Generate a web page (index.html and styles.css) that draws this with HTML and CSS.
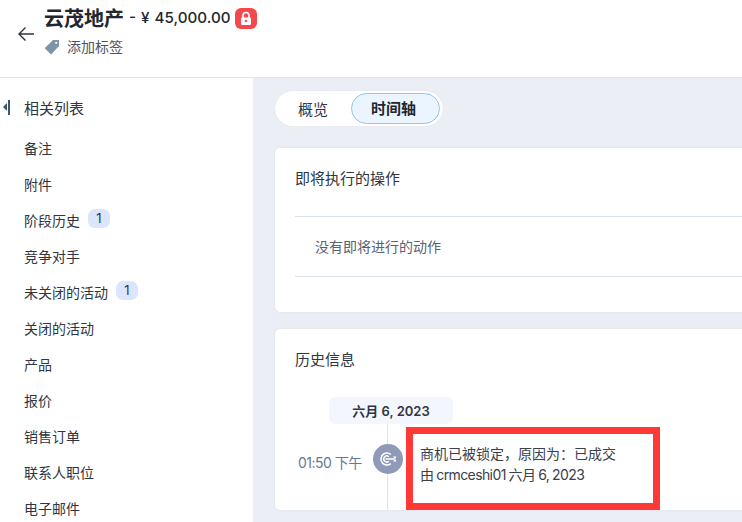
FILE: index.html
```html
<!DOCTYPE html>
<html>
  <head>
    <meta charset="UTF-8">
    <title>云茂地产</title>
    <link rel="stylesheet" href="styles.css">
  </head>
  <body>
    <div class="page">
      <header class="top">
        <svg class="back" width="18" height="16" viewBox="0 0 18 16"><path d="M17 8H2M8.500 1.500 2 8l6.500 6.500" fill="none" stroke="#2c3440" stroke-width="1.400"/></svg>
        <div class="top-info">
          <div class="top-title">
            <span class="name">云茂地产</span>
            <span class="amount">- ¥ 45,000.00</span>
            <span class="lock">
              <svg width="14" height="15" viewBox="0 0 14 15"><path d="M4 7V4.500a3 3 0 0 1 6 0V7" fill="none" stroke="#fff" stroke-width="1.700"/><rect x="2" y="6.500" width="10" height="7.500" rx="1.200" fill="#fff"/><circle cx="7" cy="10" r="1.200" fill="#f4484f"/></svg>
            </span>
          </div>
          <div class="top-tag">
            <svg width="16" height="16" viewBox="0 0 16 16"><path d="M9 1h6v6l-8 8.500L.7 9.200z" fill="#7d93a8"/><circle cx="12.200" cy="3.800" r="1.100" fill="#fff"/></svg>
            <span>添加标签</span>
          </div>
        </div>
      </header>
      <div class="body">
        <aside class="side">
          <div class="side-head">
            <span class="side-toggle"><i class="arrow"></i><i class="bar"></i></span>
            <span>相关列表</span>
          </div>
          <div class="side-item">备注</div>
          <div class="side-item">附件</div>
          <div class="side-item">阶段历史 <span class="badge">1</span></div>
          <div class="side-item">竞争对手</div>
          <div class="side-item">未关闭的活动 <span class="badge">1</span></div>
          <div class="side-item">关闭的活动</div>
          <div class="side-item">产品</div>
          <div class="side-item">报价</div>
          <div class="side-item">销售订单</div>
          <div class="side-item">联系人职位</div>
          <div class="side-item">电子邮件</div>
        </aside>
        <main class="main">
          <div class="tabs">
            <span class="tab">概览</span>
            <span class="tab active">时间轴</span>
          </div>
          <section class="card card-upcoming">
            <h3 class="card-title">即将执行的操作</h3>
            <div class="empty">没有即将进行的动作</div>
          </section>
          <section class="card card-history">
            <h3 class="card-title">历史信息</h3>
            <div class="date-row"><span class="date-chip">六月 6, 2023</span></div>
            <div class="event">
              <span class="event-time">01:50 下午</span>
              <span class="event-rail">
                <span class="event-dot">
                  <svg width="20" height="16" viewBox="0 0 20 16" fill="none" stroke="#fff"><path d="M12.800 3.400A6 6 0 1 0 12.800 12.600" stroke-width="1.500"/><path d="M10.800 5.800A3 3 0 1 0 10.800 10.200" stroke-width="1.400"/><path d="M7.500 8h9" stroke-width="1.500"/><path d="M15 5.500 16.800 8 15 10.500h3.500L17.200 8l1.300-2.500z" fill="#fff" stroke="none"/></svg>
                </span>
              </span>
              <div class="event-text">
                <p>商机已被锁定，原因为：已成交</p>
                <p class="event-by">由 crmceshi01 六月 6, 2023</p>
                <div class="mark"></div>
              </div>
            </div>
          </section>
        </main>
      </div>
    </div>
  </body>
</html>
```

FILE: styles.css
```css
*, ::after, ::before {
  box-sizing: border-box;
}

html, body {
  margin: 0;
  height: 100%;
  overflow: hidden;
  background: #fff;
  font-family: Inter, "Noto Sans CJK SC", sans-serif;
  color: #2f3541;
}

.page {
  width: 742px;
  height: 522px;
  display: flex;
  flex-direction: column;
  overflow: hidden;
}

/* header */
.top {
  height: 78px;
  flex: none;
  display: flex;
  align-items: flex-start;
  border-bottom: 1px solid #e2e4ec;
}

.back {
  margin: 26px 0 0 17px;
}

.top-info {
  margin: 2px 0 0 9px;
}

.top-title {
  display: flex;
  align-items: center;
  height: 30px;
}

.name {
  font-size: 20px;
  font-weight: 700;
  color: #22262e;
}

.amount {
  margin-left: 5px;
  font-size: 15.200px;
  font-weight: 500;
  word-spacing: 1px;
  color: #22262e;
}

.lock {
  margin: 2px 0 0 4px;
  width: 22px;
  height: 21px;
  border-radius: 6px;
  background: #f4484f;
  display: flex;
  align-items: center;
  justify-content: center;
}

.top-tag {
  margin-top: 6px;
  display: flex;
  align-items: center;
  gap: 7px;
  font-size: 14px;
  line-height: 18px;
  color: #4d5563;
}

/* sidebar */
.body {
  flex: 1;
  display: flex;
  min-height: 0;
}

.side {
  width: 253px;
  flex: none;
  padding-top: 11px;
}

.side-head {
  display: flex;
  align-items: center;
  height: 36px;
  margin-bottom: 5px;
  font-size: 15px;
}

.side-toggle {
  display: flex;
  align-items: center;
  gap: 1px;
  width: 24px;
  padding-left: 3px;
}

.arrow {
  width: 0;
  height: 0;
  border: 4px solid transparent;
  border-left-width: 0;
  border-right: 4px solid #3a5670;
}

.bar {
  width: 2px;
  height: 15px;
  background: #3a5670;
}

.side-item {
  height: 36px;
  padding-left: 24px;
  display: flex;
  align-items: center;
  font-size: 14px;
}

.badge {
  margin: -4px 0 0 8px;
  width: 22px;
  height: 19px;
  border-radius: 7px;
  background: #dbe6fd;
  font-size: 13px;
  line-height: 18px;
  text-align: center;
}

/* main column */
.main {
  flex: 1;
  min-width: 0;
  background: #ebeef4;
  padding: 13px 0 0 22px;
  overflow: hidden;
}

.tabs {
  width: 168px;
  height: 35px;
  border-radius: 18px;
  background: #fff;
  display: flex;
  align-items: center;
  padding: 2px;
  box-shadow: 0 0 1px #cfd5df;
}

.tab {
  font-size: 15px;
  text-align: center;
  width: 74px;
  padding-right: 2px;
}

.active {
  width: 89px;
  height: 31px;
  line-height: 29px;
  border: 1px solid #90c6ee;
  border-radius: 16px;
  background: #ebf5ff;
  font-weight: 700;
  color: #22262e;
  padding-right: 4px;
}

.card {
  width: 600px;
  background: #fff;
  border-radius: 5px 0 0 5px;
  box-shadow: 0 0 2px #d5dbe5;
  padding: 0 0 0 20px;
}

.card-title {
  margin: 0;
  font-size: 15px;
  font-weight: 400;
  line-height: 22px;
}

.card-upcoming {
  margin-top: 22px;
  height: 164px;
  padding-top: 20px;
}

.empty {
  margin-top: 26px;
  height: 61px;
  line-height: 60px;
  padding-left: 20px;
  border-top: 1px solid #d9e3ea;
  border-bottom: 1px solid #d9e3ea;
  font-size: 14px;
  color: #5a6270;
}

.card-history {
  margin-top: 17px;
  height: 181px;
  padding-top: 20px;
}

.date-row {
  margin: 26px 0 0 34px;
  display: flex;
}

.date-chip {
  width: 124px;
  height: 27px;
  border-radius: 6px;
  background: #f4f6fe;
  font-size: 13px;
  font-weight: 600;
  line-height: 28px;
  text-align: center;
  color: #2f3542;
}

/* timeline row, 86px down to the card edge */
.event {
  display: flex;
  height: 86px;
}

.event-time {
  width: 78px;
  padding: 30px 0 0 3px;
  font-size: 14px;
  letter-spacing: -0.500px;
  line-height: 18px;
  color: #66789a;
}

.event-rail {
  width: 30px;
  display: flex;
  justify-content: center;
  background: linear-gradient(#dfe2e8, #dfe2e8) 14px 0 / 1px 100% no-repeat;
}

.event-dot {
  margin-top: 20px;
  width: 30px;
  height: 30px;
  border-radius: 50%;
  background: #8e9ab8;
  display: flex;
  align-items: center;
  justify-content: center;
}

.event-text {
  position: relative;
  margin-left: 3px;
  padding: 19px 0 0 14px;
  width: 254px;
  font-size: 14px;
  line-height: 21px;
  color: #3a404c;
}

.event-text p {
  margin: 0;
}

.event-by {
  letter-spacing: -0.600px;
  word-spacing: -0.500px;
}

/* red annotation drawn over the row */
.mark {
  position: absolute;
  left: 0;
  top: 3px;
  right: 0;
  bottom: 0;
  border: 7px solid #ff3838;
}
```
